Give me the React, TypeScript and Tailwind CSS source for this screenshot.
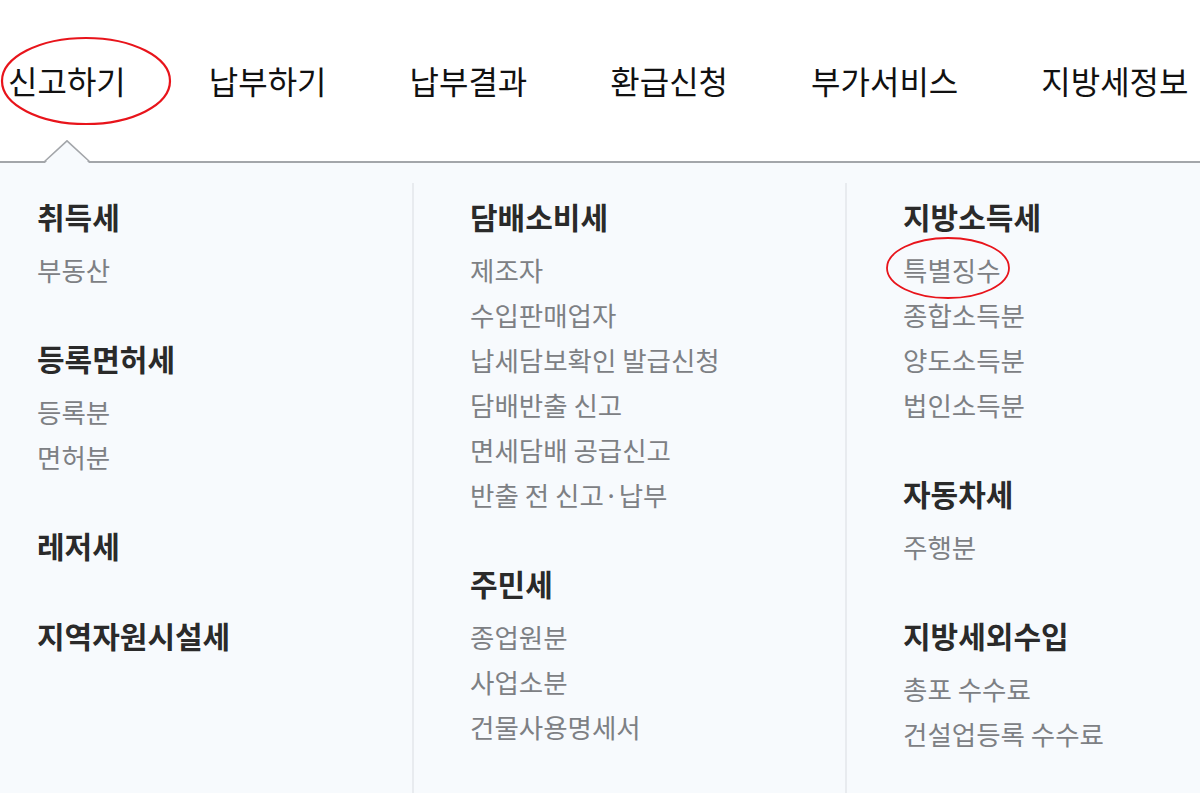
import React from "react";

const font = { fontFamily: '"Noto Sans CJK KR", "Noto Sans", sans-serif' };

type Section = { title: string; items: string[] };

const cols: Section[][] = [
  [
    { title: "취득세", items: ["부동산"] },
    { title: "등록면허세", items: ["등록분", "면허분"] },
    { title: "레저세", items: [] },
    { title: "지역자원시설세", items: [] },
  ],
  [
    {
      title: "담배소비세",
      items: [
        "제조자",
        "수입판매업자",
        "납세담보확인 발급신청",
        "담배반출 신고",
        "면세담배 공급신고",
        "반출 전 신고·납부",
      ],
    },
    { title: "주민세", items: ["종업원분", "사업소분", "건물사용명세서"] },
  ],
  [
    { title: "지방소득세", items: ["특별징수", "종합소득분", "양도소득분", "법인소득분"] },
    { title: "자동차세", items: ["주행분"] },
    { title: "지방세외수입", items: ["총포 수수료", "건설업등록 수수료"] },
  ],
];

const nav = ["신고하기", "납부하기", "납부결과", "환급신청", "부가서비스", "지방세정보"];

function Column({ sections }: { sections: Section[] }) {
  return (
    <div className="flex flex-col gap-[43px]">
      {sections.map((s) => (
        <div key={s.title} className="flex flex-col">
          <div className="text-[30px] leading-[47px] font-semibold text-[#2a2a2a] whitespace-nowrap">{s.title}</div>
          {s.items.length > 0 && (
            <ul className="mt-[7px] flex flex-col">
              {s.items.map((it) => (
                <li key={it} className="text-[26.5px] leading-[45px] text-[#7d8084] whitespace-nowrap">
                  {it}
                </li>
              ))}
            </ul>
          )}
        </div>
      ))}
    </div>
  );
}

export default function App() {
  return (
    <div className="relative w-[1200px] h-[800px] bg-white overflow-hidden" style={font}>
      <div className="relative h-[163px] border-b-2 border-[#a3a6aa]">
        <nav className="flex items-center h-full pl-[8px] gap-[83px] pb-[2px]">
          {nav.map((n) => (
            <span key={n} className="text-[32px] leading-none text-[#111] whitespace-nowrap font-normal">
              {n}
            </span>
          ))}
        </nav>
        <svg
          className="absolute left-[44px] top-[140px]"
          width="46"
          height="25"
          viewBox="0 0 46 25"
        >
          <polygon points="1,23 23,1 45,23 45,25 1,25" fill="#f7fafd" />
          <polyline points="0,22 23,0.8 46,22" fill="none" stroke="#a3a6aa" strokeWidth="1.6" />
        </svg>
      </div>
      <div className="flex h-[630px] bg-[#f7fafd] pt-[20px]">
        <div className="w-[412px] pl-[37px] pt-[10px]">
          <Column sections={cols[0]} />
        </div>
        <div className="w-[433px] pl-[56px] pt-[10px] border-l-2 border-[#e8ebef]">
          <Column sections={cols[1]} />
        </div>
        <div className="flex-1 pl-[56px] pt-[10px] border-l-2 border-[#e8ebef]">
          <Column sections={cols[2]} />
        </div>
      </div>
      <svg className="absolute left-0 top-0 pointer-events-none" width="1200" height="800">
        <ellipse cx="86" cy="81" rx="84" ry="43" fill="none" stroke="#e8141b" strokeWidth="2.2" />
        <ellipse cx="948" cy="268" rx="61" ry="30" fill="none" stroke="#e8141b" strokeWidth="1.8" />
      </svg>
    </div>
  );
}
